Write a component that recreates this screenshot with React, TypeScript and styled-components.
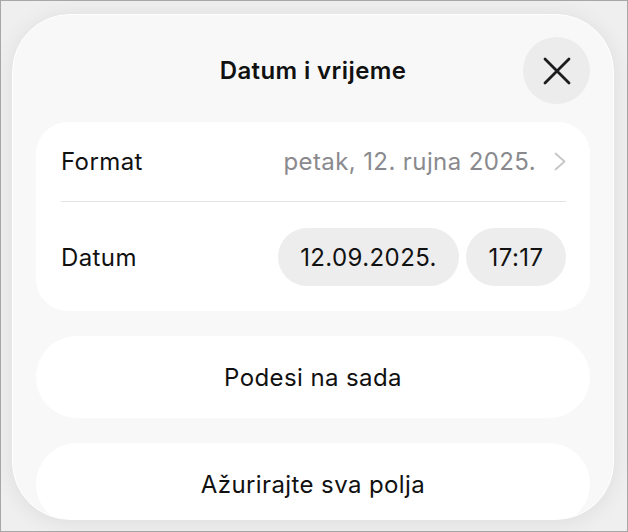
import styled, { createGlobalStyle } from "styled-components";

const GlobalStyle = createGlobalStyle`
  html, body {
    margin: 0;
    padding: 0;
  }
  body {
    font-family: Inter, "Noto Sans", sans-serif;
    -webkit-font-smoothing: antialiased;
    color: #111;
  }
`;

const Frame = styled.div`
  box-sizing: border-box;
  width: 628px;
  height: 532px;
  border: 1px solid #a8a8a8;
  background: #efefef;
  padding: 13px 13px 11px 11px;
  display: flex;
`;

const Sheet = styled.div`
  flex: 1;
  display: flex;
  flex-direction: column;
  background: #f8f8f8;
  border: 1px solid #ffffff;
  border-radius: 58px;
  box-shadow: 0 2px 22px rgba(0, 0, 0, 0.08);
  overflow: hidden;
  padding: 22px 23px 0 23px;
`;

const Header = styled.div`
  display: grid;
  grid-template-columns: 67px 1fr 67px;
  align-items: center;
`;

const Title = styled.h1`
  grid-column: 2;
  margin: 0;
  text-align: center;
  font-size: 24px;
  font-weight: 600;
  letter-spacing: 0.4px;
`;

const CloseButton = styled.button`
  grid-column: 3;
  width: 67px;
  height: 67px;
  border: none;
  border-radius: 50%;
  background: #ececec;
  display: flex;
  align-items: center;
  justify-content: center;
  padding: 0;
`;

const Card = styled.div`
  margin-top: 18px;
  background: #ffffff;
  border-radius: 32px;
  display: flex;
  flex-direction: column;
`;

const Row = styled.div<{ $tall?: boolean }>`
  display: flex;
  align-items: center;
  justify-content: space-between;
  padding: ${(p) => (p.$tall ? "26px 24px 25px 25px" : "0 24px 0 25px")};
  height: ${(p) => (p.$tall ? "auto" : "79px")};
`;

const Label = styled.span`
  font-size: 24px;
  font-weight: 400;
  letter-spacing: 0.4px;
`;

const Value = styled.span`
  display: flex;
  align-items: center;
  gap: 18px;
  font-size: 24px;
  color: #8a8a8e;
  letter-spacing: 0.4px;
`;

const Divider = styled.div`
  height: 1px;
  background: #e4e4e6;
  margin: 0 24px 0 25px;
`;

const Pills = styled.div`
  display: flex;
  gap: 7px;
`;

const Pill = styled.span<{ $w: number }>`
  height: 58px;
  width: ${(p) => p.$w}px;
  border-radius: 29px;
  background: #ededed;
  display: flex;
  align-items: center;
  justify-content: center;
  font-size: 24px;
  letter-spacing: 0.4px;
`;

const ActionButton = styled.button`
  flex-shrink: 0;
  margin-top: 25px;
  height: 82px;
  border: none;
  border-radius: 41px;
  background: #ffffff;
  font-family: inherit;
  font-size: 24px;
  letter-spacing: 0.4px;
  color: #111;
`;

const CloseIcon = () => (
  <svg width="28" height="28" viewBox="0 0 28 28">
    <path
      d="M2 2 L26 26 M26 2 L2 26"
      stroke="#1c1c1e"
      strokeWidth="2.8"
      strokeLinecap="round"
      fill="none"
    />
  </svg>
);

const Chevron = () => (
  <svg width="12" height="19" viewBox="0 0 12 19">
    <path
      d="M1.5 1.5 L10.5 9.5 L1.5 17.5"
      stroke="#c7c7c9"
      strokeWidth="1.8"
      strokeLinecap="round"
      strokeLinejoin="round"
      fill="none"
    />
  </svg>
);

const App = () => {
  return (
    <>
      <GlobalStyle />
      <Frame>
        <Sheet>
          <Header>
            <Title>Datum i vrijeme</Title>
            <CloseButton aria-label="Zatvori">
              <CloseIcon />
            </CloseButton>
          </Header>
          <Card>
            <Row>
              <Label>Format</Label>
              <Value>
                petak, 12. rujna 2025.
                <Chevron />
              </Value>
            </Row>
            <Divider />
            <Row $tall>
              <Label>Datum</Label>
              <Pills>
                <Pill $w={181}>12.09.2025.</Pill>
                <Pill $w={100}>17:17</Pill>
              </Pills>
            </Row>
          </Card>
          <ActionButton>Podesi na sada</ActionButton>
          <ActionButton>Ažurirajte sva polja</ActionButton>
        </Sheet>
      </Frame>
    </>
  );
};

export default App;
